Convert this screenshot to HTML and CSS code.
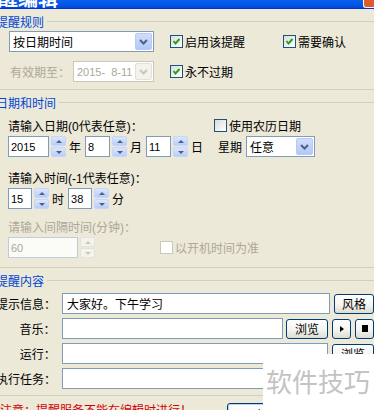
FILE: index.html
```html
<!DOCTYPE html>
<html lang="zh-CN">
<head>
  <meta charset="UTF-8">
  <title>提醒编辑</title>
  <link rel="stylesheet" href="styles.css">
</head>
<body>
  <div class="dialog">
    <div class="titlebar">
      <span class="title">提醒编辑</span>
      <span class="close"></span>
    </div>

    <!-- 提醒规则 -->
    <div class="group group-rule">
      <div class="group-head"><span>提醒规则</span></div>
      <div class="rule-row rule-first">
        <div class="combo combo-type">
          <span class="combo-text">按日期时间</span>
          <span class="drop"><svg viewBox="0 0 9 6"><polyline points="1,1 4.5,4.5 8,1" /></svg></span>
        </div>
        <label class="check col-enable"><span class="box"><svg viewBox="0 0 11 11"><polyline points="2.5,5 4.5,7.5 8.5,3" /></svg></span>启用该提醒</label>
        <label class="check"><span class="box"><svg viewBox="0 0 11 11"><polyline points="2.5,5 4.5,7.5 8.5,3" /></svg></span>需要确认</label>
      </div>
      <div class="rule-row rule-second">
        <div class="expire">
          <span class="muted">有效期至：</span>
          <div class="combo combo-date disabled">
            <span class="combo-text">2015-&nbsp; 8-11</span>
            <span class="drop"><svg viewBox="0 0 9 6"><polyline points="1,1 4.5,4.5 8,1" /></svg></span>
          </div>
        </div>
        <label class="check col-enable"><span class="box"><svg viewBox="0 0 11 11"><polyline points="2.5,5 4.5,7.5 8.5,3" /></svg></span>永不过期</label>
      </div>
    </div>

    <!-- 日期和时间 -->
    <div class="group group-date">
      <div class="group-head"><span>日期和时间</span></div>
      <div class="hint-row hint-date">
        <span class="hint-text">请输入日期(0代表任意)：</span>
        <label class="check"><span class="box"></span>使用农历日期</label>
      </div>
      <div class="spin-row">
        <span class="textbox w41">2015</span>
        <span class="updown"><span class="up"></span><span class="dn"></span></span>
        <span class="unit">年</span>
        <span class="textbox w25">8</span>
        <span class="updown"><span class="up"></span><span class="dn"></span></span>
        <span class="unit">月</span>
        <span class="textbox w25">11</span>
        <span class="updown"><span class="up"></span><span class="dn"></span></span>
        <span class="unit">日</span>
        <span class="week-label">星期</span>
        <div class="combo combo-week">
          <span class="combo-text">任意</span>
          <span class="drop"><svg viewBox="0 0 9 6"><polyline points="1,1 4.5,4.5 8,1" /></svg></span>
        </div>
      </div>
      <div class="hint-row hint-time">
        <span class="hint-text">请输入时间(-1代表任意)：</span>
      </div>
      <div class="spin-row">
        <span class="textbox w24">15</span>
        <span class="updown"><span class="up"></span><span class="dn"></span></span>
        <span class="unit">时</span>
        <span class="textbox w24">38</span>
        <span class="updown"><span class="up"></span><span class="dn"></span></span>
        <span class="unit">分</span>
      </div>
      <div class="hint-row hint-interval">
        <span class="hint-text muted">请输入间隔时间(分钟)：</span>
      </div>
      <div class="spin-row row-interval">
        <span class="textbox w70 disabled">60</span>
        <span class="updown disabled"><span class="up"></span><span class="dn"></span></span>
        <label class="check check-boot disabled"><span class="box"></span>以开机时间为准</label>
      </div>
    </div>

    <!-- 提醒内容 -->
    <div class="group group-content">
      <div class="group-head"><span>提醒内容</span></div>
      <div class="content-row">
        <span class="field-label">提示信息：</span>
        <span class="textbox text-msg">大家好。下午学习</span>
        <button class="btn btn-style">风格</button>
      </div>
      <div class="content-row">
        <span class="field-label">音乐：</span>
        <span class="textbox text-music"></span>
        <button class="btn btn-browse">浏览</button>
        <button class="btn btn-small"><span class="play"></span></button>
        <button class="btn btn-small"><span class="stop"></span></button>
      </div>
      <div class="content-row">
        <span class="field-label">运行：</span>
        <span class="textbox text-msg"></span>
        <button class="btn btn-browse">浏览</button>
      </div>
      <div class="content-row">
        <span class="field-label">执行任务：</span>
        <span class="textbox text-task"></span>
      </div>
    </div>

    <div class="footer">
      <span class="note">注意：提醒服务不能在编辑时进行！</span>
      <button class="btn btn-ok">确定</button>
    </div>

    <div class="watermark">软件技巧</div>
  </div>
</body>
</html>
```

FILE: styles.css
```css
* {
  margin: 0;
  padding: 0;
  box-sizing: border-box;
}

body {
  background: #ece9d8;
  font-family: "Liberation Sans", "Noto Sans CJK SC", sans-serif;
  font-size: 12px;
  color: #000;
  width: 374px;
  height: 410px;
  overflow: hidden;
}

.dialog {
  position: relative;
  height: 410px;
  overflow: hidden;
}

/* title bar */
.titlebar {
  display: flex;
  height: 9px;
  overflow: hidden;
  background: linear-gradient(#0b60ea, #0056e6 60%, #0046d8);
  border-bottom: 1px solid #0831d9;
}

.title {
  font-family: "Noto Sans CJK SC", sans-serif;
  font-size: 20px;
  font-weight: bold;
  line-height: 20px;
  color: #fff;
  margin: -12px 0 0 -22px;
  white-space: nowrap;
}

.close {
  margin-left: auto;
  width: 11px;
  height: 8px;
  background: #df5a2c;
  border: 1px solid #fff;
  border-top: none;
  border-right: none;
  border-radius: 0 0 0 3px;
}

/* group boxes */
.group {
  border-bottom: 1px solid #d0d0bf;
}

.group-head {
  display: flex;
  align-items: center;
  height: 14px;
  margin-top: 5px;
  color: #0046d5;
  white-space: nowrap;
}

.group-head span {
  margin-left: -4px;
}

.group-head::after {
  content: "";
  flex: 1;
  border-top: 1px solid #d0d0bf;
  margin-left: 3px;
}

.muted {
  color: #aca899;
}

/* combo boxes */
.combo {
  display: flex;
  align-items: center;
  height: 21px;
  border: 1px solid #7f9db9;
  background: #fff;
  padding: 1px;
}

.combo-text {
  flex: 1;
  padding-left: 2px;
  white-space: nowrap;
}

.drop {
  width: 17px;
  height: 100%;
  display: flex;
  align-items: center;
  justify-content: center;
  background: linear-gradient(#d0ddfc, #b3c8f7);
  border: 1px solid #b7caf7;
  border-radius: 2px;
}

.drop svg {
  width: 9px;
  height: 6px;
  fill: none;
  stroke: #4d6185;
  stroke-width: 2;
}

.combo.disabled {
  border-color: #c9c7ba;
  color: #aca899;
  font-size: 11px;
}

.combo.disabled .drop {
  background: #f3f2ec;
  border-color: #e3e1d6;
}

.combo.disabled .drop svg {
  stroke: #c9c7ba;
}

/* checkboxes */
.check {
  display: flex;
  align-items: center;
  gap: 2px;
  white-space: nowrap;
}

.box {
  display: flex;
  width: 13px;
  height: 13px;
  border: 1px solid #1c5180;
  background: linear-gradient(135deg, #dcdcd7, #fff);
}

.box svg {
  width: 11px;
  height: 11px;
  fill: none;
  stroke: #21a121;
  stroke-width: 2;
}

.check.disabled {
  color: #aca899;
}

.check.disabled .box {
  border-color: #cac8bb;
  background: #fff;
}

/* 提醒规则 */
.group-rule {
  padding-bottom: 7px;
}

.rule-row {
  display: flex;
  align-items: center;
  height: 21px;
  padding-left: 9px;
}

.rule-first {
  margin-top: 3px;
}

.rule-second {
  margin-top: 9px;
}

.combo-type {
  width: 145px;
}

.col-enable {
  width: 113px;
  margin-left: 16px;
}

.expire {
  display: flex;
  align-items: center;
  justify-content: space-between;
  width: 145px;
  padding-left: 1px;
}

.combo-date {
  width: 81px;
}

/* 日期和时间 */
.group-date {
  padding-bottom: 9px;
}

.hint-row {
  display: flex;
  align-items: center;
  height: 16px;
  padding-left: 8px;
}

.hint-date {
  margin-top: 8px;
}

.hint-date .hint-text {
  width: 206px;
}

.hint-time {
  margin-top: 12px;
}

.hint-interval {
  margin-top: 9px;
}

.spin-row {
  display: flex;
  align-items: center;
  height: 21px;
  margin-top: 3px;
  padding-left: 8px;
}

.textbox {
  display: flex;
  align-items: center;
  height: 21px;
  border: 1px solid #7f9db9;
  background: #fff;
  padding: 0 2px;
  font-size: 11px;
  white-space: nowrap;
}

.textbox.disabled {
  border-color: #c2ccd8;
  background: #fbfbf8;
  color: #aca899;
}

.w24 { width: 24px; }
.w25 { width: 25px; }
.w41 { width: 41px; }
.w70 { width: 70px; }

.updown {
  display: flex;
  flex-direction: column;
  gap: 1px;
  width: 15px;
  height: 21px;
  margin-left: 2px;
}

.updown span {
  flex: 1;
  display: flex;
  align-items: center;
  justify-content: center;
  background: linear-gradient(#dbe6fd, #b9cdf8);
  border: 1px solid #c6d5fa;
  border-radius: 2px;
}

.updown span::after {
  content: "";
  border-left: 3px solid transparent;
  border-right: 3px solid transparent;
}

.updown .up::after {
  border-bottom: 3px solid #4d6185;
}

.updown .dn::after {
  border-top: 3px solid #4d6185;
}

.updown.disabled span {
  background: #f4f3ee;
  border-color: #e4e2d7;
}

.updown.disabled .up::after {
  border-bottom-color: #c9c7ba;
}

.updown.disabled .dn::after {
  border-top-color: #c9c7ba;
}

.unit {
  margin: 0 4px 0 3px;
}

.week-label {
  margin-left: 11px;
  margin-right: 4px;
}

.combo-week {
  width: 69px;
}

.check-boot {
  margin-left: 65px;
}

/* 提醒内容 */
.group-content {
  padding-bottom: 6px;
}

.content-row {
  display: flex;
  align-items: center;
  height: 21px;
  margin-top: 4px;
}

.group-content .group-head + .content-row {
  margin-top: 6px;
}

.field-label {
  display: flex;
  justify-content: flex-end;
  width: 56px;
  margin-right: 6px;
  white-space: nowrap;
}

.content-row .textbox {
  font-size: 12px;
  padding: 0 4px;
}

.text-msg { width: 268px; }
.text-music { width: 223px; }
.text-task { width: 320px; }

.btn {
  display: flex;
  align-items: center;
  justify-content: center;
  flex-shrink: 0;
  height: 20px;
  border: 1px solid #003c74;
  border-radius: 3px;
  background: linear-gradient(#fff, #f4f4f0 55%, #dcdcd2);
  font: inherit;
  color: #000;
}

.btn-style {
  width: 40px;
  margin-left: 4px;
}

.btn-browse {
  width: 42px;
  margin-left: 4px;
}

.text-music + .btn-browse {
  margin-left: 3px;
}

.btn-small {
  width: 19px;
  margin-left: 4px;
}

.play {
  border-top: 3px solid transparent;
  border-bottom: 3px solid transparent;
  border-left: 4px solid #000;
}

.stop {
  width: 6px;
  height: 7px;
  background: #000;
}

/* footer */
.footer {
  display: flex;
  margin-top: 7px;
}

.note {
  width: 227px;
  color: #d20000;
  line-height: 16px;
  white-space: nowrap;
}

.btn-ok {
  width: 75px;
  height: 22px;
  box-shadow: inset 0 0 0 1px #b8d0f8;
}

/* watermark overlay */
.watermark {
  position: absolute;
  left: 263px;
  top: 354px;
  right: 0;
  bottom: 0;
  background: #fff;
  padding: 14px 0 0 3px;
  font-family: "Noto Sans CJK SC", sans-serif;
  font-size: 26px;
  line-height: 26px;
  color: #c3c3c3;
  white-space: nowrap;
}
```
